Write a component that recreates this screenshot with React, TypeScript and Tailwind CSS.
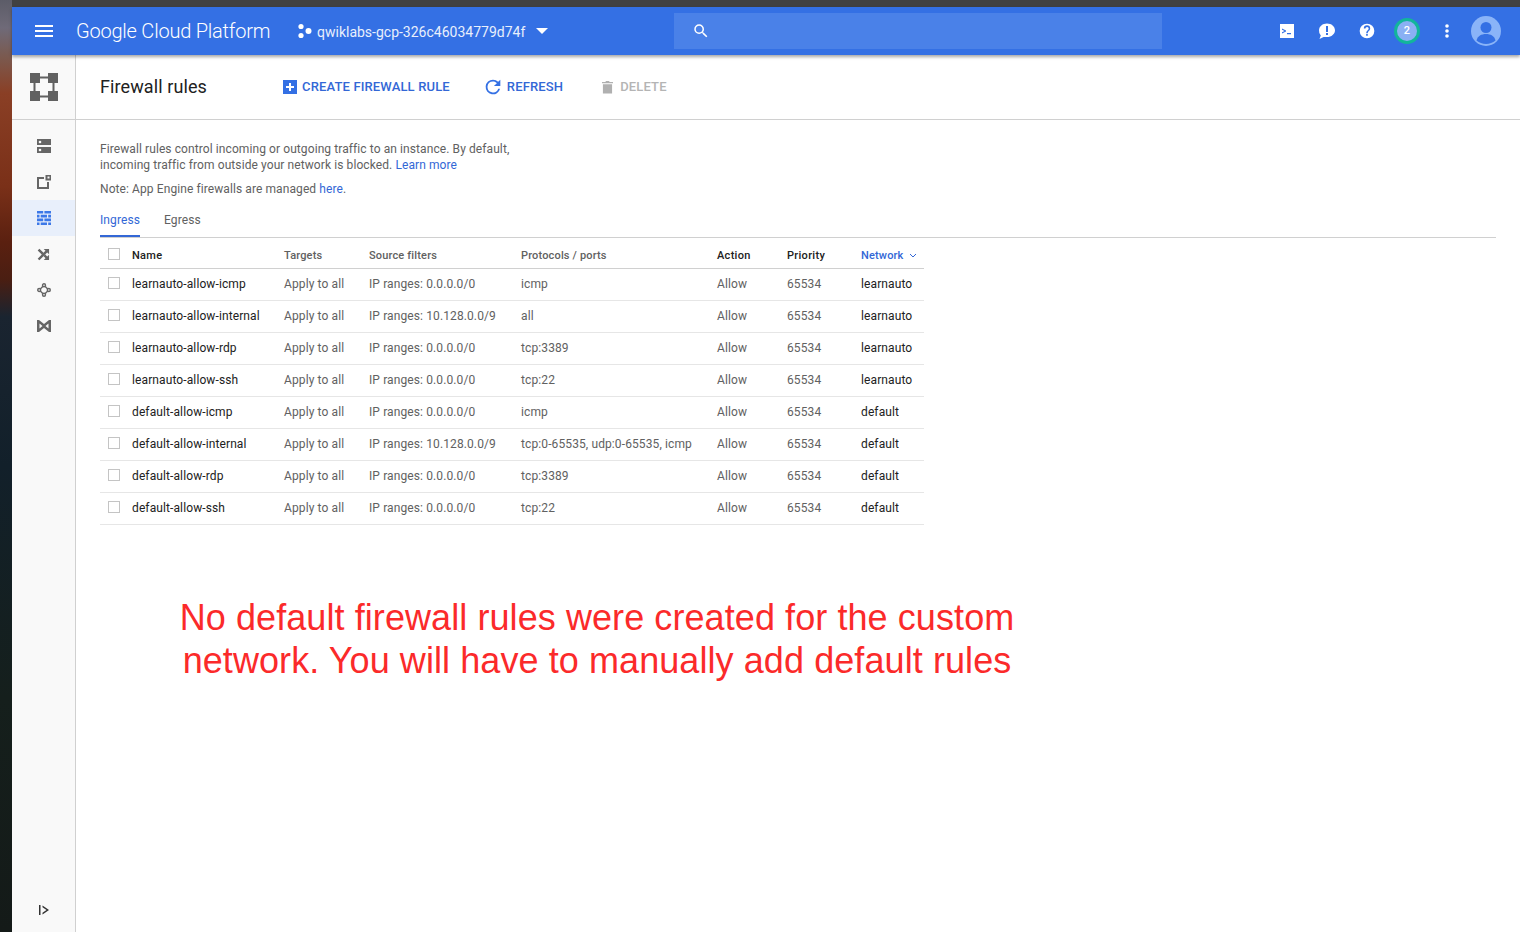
import React from 'react';

const ROWS = [
  ['learnauto-allow-icmp', 'IP ranges: 0.0.0.0/0', 'icmp', 'learnauto'],
  ['learnauto-allow-internal', 'IP ranges: 10.128.0.0/9', 'all', 'learnauto'],
  ['learnauto-allow-rdp', 'IP ranges: 0.0.0.0/0', 'tcp:3389', 'learnauto'],
  ['learnauto-allow-ssh', 'IP ranges: 0.0.0.0/0', 'tcp:22', 'learnauto'],
  ['default-allow-icmp', 'IP ranges: 0.0.0.0/0', 'icmp', 'default'],
  ['default-allow-internal', 'IP ranges: 10.128.0.0/9', 'tcp:0-65535, udp:0-65535, icmp', 'default'],
  ['default-allow-rdp', 'IP ranges: 0.0.0.0/0', 'tcp:3389', 'default'],
  ['default-allow-ssh', 'IP ranges: 0.0.0.0/0', 'tcp:22', 'default'],
];

const GRID = 'grid grid-cols-[32px_152px_85px_152px_196px_70px_74px_63px] items-center';

function Checkbox({ className }: { className: string }) {
  return <span className={`ml-2 block h-3 w-3 border border-[#c4c4c4] bg-white ${className}`} />;
}

function TopBar() {
  return (
    <header className="relative z-10 flex h-12 shrink-0 items-center bg-[#3470e4] text-white shadow-[0_2px_3px_rgba(0,0,0,0.35)]">
      <svg className="ml-[20px] h-6 w-6" viewBox="0 0 24 24" fill="currentColor">
        <path d="M3 18h18v-2H3v2zm0-5h18v-2H3v2zm0-7v2h18V6H3z" />
      </svg>
      <span className="ml-[20px] w-[221px] text-[20px] font-light tracking-[-0.22px]">Google Cloud Platform</span>
      <svg className="h-4 w-4" viewBox="0 0 16 16" fill="currentColor">
        <circle cx="4" cy="3.500" r="2.600" />
        <circle cx="11.500" cy="8" r="3" />
        <circle cx="4" cy="12.500" r="2.600" />
      </svg>
      <span className="ml-[4px] w-[219px] pt-[2px] text-sm text-[#e8effc]">qwiklabs-gcp-326c46034779d74f</span>
      <svg className="h-3 w-3" viewBox="0 0 12 12" fill="currentColor">
        <path d="M0 3h12L6 9z" />
      </svg>
      <div className="ml-[126px] flex h-9 w-[488px] items-center bg-[#4a81e8] pl-[18px]">
        <svg className="h-[18px] w-[18px]" viewBox="0 0 24 24" fill="currentColor">
          <path d="M15.500 14h-.79l-.28-.27A6.470 6.470 0 0 0 16 9.500 6.500 6.500 0 1 0 9.500 16c1.610 0 3.090-.59 4.230-1.570l.27.28v.79l5 4.990L20.490 19l-4.990-5zm-6 0C7.010 14 5 11.990 5 9.500S7.010 5 9.500 5 14 7.010 14 9.500 11.990 14 9.500 14z" />
        </svg>
      </div>
      <div className="ml-[117px] flex items-center">
        <svg className="h-4 w-4" viewBox="0 0 16 16">
          <path fill="#fff" fillRule="evenodd" d="M1 1h14v14H1zM3 5.500v1.300L5.600 8 3 9.200v1.300L7 8.600V7.400zM8 10v1.200h4V10z" />
        </svg>
        <svg className="ml-[23px] h-[18px] w-[18px]" viewBox="0 0 18 18">
          <path fill="#fff" fillRule="evenodd" d="M9 1.500c4.400 0 8 2.900 8 6.800s-3.600 6.800-8 6.800H5.600L1.500 17l1.300-3.600A6.600 6.600 0 0 1 1 8.300c0-3.900 3.600-6.800 8-6.800zM8 4v6h2V4zm0 7v2h2v-2z" />
        </svg>
        <svg className="ml-[23px] h-[16px] w-[16px]" viewBox="0 0 24 24" fill="#fff">
          <path d="M12 1a11 11 0 1 0 0 22 11 11 0 0 0 0-22zm1.200 18h-2.500v-2.500h2.500V19zm2.600-8.200-1.100 1.100c-.9.900-1.500 1.600-1.500 3.600h-2.400v-.6c0-1.300.6-2.500 1.500-3.400l1.500-1.500c.4-.5.7-1 .7-1.700a2.400 2.400 0 0 0-4.800 0H7.200a4.800 4.800 0 0 1 9.600 0c0 1-.4 1.900-1 2.500z" />
        </svg>
        <span className="ml-[19px] flex h-[26px] w-[26px] items-center justify-center rounded-full border-[3px] border-[#12b59b] bg-[#8ab0f4] text-[11px] font-medium text-white">
          2
        </span>
        <svg className="ml-[24px] h-4 w-1.5" viewBox="0 0 6 16" fill="#fff">
          <circle cx="3" cy="3" r="1.800" />
          <circle cx="3" cy="8" r="1.800" />
          <circle cx="3" cy="13" r="1.800" />
        </svg>
        <svg className="ml-[21px] h-[30px] w-[30px]" viewBox="0 0 30 30">
          <circle cx="15" cy="15" r="15" fill="#8ab4f8" />
          <circle cx="15" cy="11.500" r="5.500" fill="#3470e4" />
          <path d="M5.500 24.500c1-4.500 5-6.500 9.500-6.500s8.500 2 9.500 6.500a15 15 0 0 1-19 0z" fill="#3470e4" />
        </svg>
      </div>
    </header>
  );
}

function SideIcon({ active, children }: { active?: boolean; children: React.ReactNode }) {
  return (
    <div className={`flex h-9 items-center justify-center ${active ? 'bg-[#e8effb] text-[#3c78e8]' : 'text-[#666]'}`}>
      {children}
    </div>
  );
}

function Sidebar() {
  return (
    <aside className="flex w-[64px] shrink-0 flex-col border-r border-[#d0d0d0] bg-[#f9f9f9]">
      <div className="flex h-[65px] shrink-0 items-center justify-center border-b border-[#d0d0d0]">
        <svg className="h-7 w-7 text-[#616161]" viewBox="0 0 28 28" fill="currentColor">
          <path d="M0 0h10v10H0zM18 0h10v10H18zM0 18h10v10H0zM18 18h10v10H18z" />
          <path d="M10 3.500h8v2h-8zM10 22.500h8v2h-8zM3.500 10h2v8h-2zM22.500 10h2v8h-2z" />
        </svg>
      </div>
      <nav className="flex flex-col pt-[8px]">
        <SideIcon>
          <svg className="h-[14px] w-[14px]" viewBox="0 0 14 14" fill="currentColor">
            <path d="M0 0h14v6H0zM0 8h14v6H0z" />
            <circle cx="3" cy="3" r="1.300" fill="#f9f9f9" />
            <circle cx="3" cy="11" r="1.300" fill="#f9f9f9" />
          </svg>
        </SideIcon>
        <SideIcon>
          <svg className="h-[14px] w-[14px]" viewBox="0 0 14 14" fill="currentColor">
            <path fillRule="evenodd" d="M0 2h7v2H2v8h8V7h2v7H0zM8.500 0H14v5.500H8.500zM10.500 1.500v2h2v-2z" />
          </svg>
        </SideIcon>
        <SideIcon active>
          <svg className="h-[14px] w-[14px]" viewBox="0 0 14 14" fill="currentColor">
            <path d="M0 0h6.200v2.600H0zM7.400 0H14v2.600H7.400zM0 3.800h2.500v2.600H0zM3.700 3.800H10v2.600H3.700zM11.200 3.800H14v2.600h-2.800zM0 7.600h6.200v2.600H0zM7.400 7.600H14v2.600H7.400zM0 11.400h2.500V14H0zM3.700 11.400H10V14H3.700zM11.200 11.400H14V14h-2.800z" />
          </svg>
        </SideIcon>
        <SideIcon>
          <svg className="h-[15px] w-[15px]" viewBox="0 0 24 24" fill="currentColor">
            <path d="M10.600 9.200 5.400 4 4 5.400l5.200 5.200zM14.500 4l2 2L4 18.600 5.400 20 18 7.500l2 2V4zM14.800 13.400l-1.400 1.400 3.100 3.100-2 2.100H20v-5.500l-2 2z" stroke="currentColor" strokeWidth="1.800" />
          </svg>
        </SideIcon>
        <SideIcon>
          <svg className="h-[14px] w-[14px]" viewBox="0 0 14 14" fill="none" stroke="currentColor" strokeWidth="1.400">
            <circle cx="7" cy="2.200" r="1.500" />
            <circle cx="2.200" cy="7" r="1.500" />
            <circle cx="11.800" cy="7" r="1.500" />
            <circle cx="7" cy="11.800" r="1.500" />
            <path d="M6 3.300 3.300 6M8 3.300 10.700 6M3.300 8 6 10.700M10.700 8 8 10.700" />
          </svg>
        </SideIcon>
        <SideIcon>
          <svg className="h-[14px] w-[14px]" viewBox="0 0 14 14" fill="currentColor">
            <path fillRule="evenodd" d="M0 1h2l5 4 5-4h2v12h-2L7 9l-5 4H0zM2.500 4.500v5L5.500 7zM11.500 4.500 8.500 7l3 2.500z" />
          </svg>
        </SideIcon>
      </nav>
      <div className="mt-auto flex h-[44px] items-center justify-center text-[#333]">
        <svg className="h-[12px] w-[12px]" viewBox="0 0 12 12" fill="currentColor">
          <path d="M1 1h1.500v10H1zM4.500 1.500 11 6l-6.500 4.500V8.800L8.500 6 4.500 3.200z" />
        </svg>
      </div>
    </aside>
  );
}

function FirewallTable() {
  return (
    <div className="w-[824px] text-xs tracking-[0.11px]">
      <div className={`${GRID} h-[31px] border-b border-[#d0d0d0] pt-[7px] text-[11px] font-medium tracking-[0.16px] text-[#616161]`}>
        <Checkbox className="mb-[6px]" />
        <span className="tracking-[0.3px] text-[#212121]">Name</span>
        <span>Targets</span>
        <span>Source filters</span>
        <span>Protocols / ports</span>
        <span className="tracking-[0.3px] text-[#212121]">Action</span>
        <span className="tracking-[0.3px] text-[#212121]">Priority</span>
        <span className="flex items-center text-[#3367d6]">
          Network
          <svg className="ml-[5px] mb-[2px] h-2 w-2" viewBox="0 0 8 8" fill="none" stroke="currentColor" strokeWidth="1">
            <path d="M1 2 4 5 7 2" />
          </svg>
        </span>
      </div>
      {ROWS.map(([name, source, ports, network]) => (
        <div key={name} className={`${GRID} h-[32px] border-b border-[#e6e6e6] pb-[2px] text-[#616161]`}>
          <Checkbox className="mb-[1px]" />
          <span className="text-[#212121]">{name}</span>
          <span>Apply to all</span>
          <span>{source}</span>
          <span>{ports}</span>
          <span>Allow</span>
          <span>65534</span>
          <span className="text-[#212121]">{network}</span>
        </div>
      ))}
    </div>
  );
}

export default function App() {
  return (
    <div className="flex h-[932px] w-[1520px] overflow-hidden bg-white font-['Roboto',sans-serif]">
      <div className="w-3 shrink-0 bg-[linear-gradient(180deg,#5c5c68_0%,#6f6a78_3%,#7a5a50_6%,#8a3f25_10%,#7a3018_20%,#5a2010_26%,#4a1e12_30%,#1a2430_34%,#12202a_50%,#151f1c_75%,#141a18_100%)]" />
      <div className="flex min-w-0 flex-1 flex-col">
        <div className="h-[7px] shrink-0 bg-[#414141]" />
        <TopBar />
        <div className="flex min-h-0 flex-1">
          <Sidebar />
          <main className="min-w-0 flex-1">
            <div className="flex h-[65px] items-center border-b border-[#d0d0d0] pl-6">
              <h1 className="w-[183px] text-lg font-normal tracking-[0.1px] text-[#212121]">Firewall rules</h1>
              <button className="flex items-center text-[13px] font-medium tracking-[0.15px] text-[#3367d6]">
                <svg className="mr-[5px] h-[14px] w-[14px]" viewBox="0 0 14 14">
                  <path fill="#3470e4" fillRule="evenodd" d="M0 0h14v14H0zM6 3v3H3v2h3v3h2V8h3V6H8V3z" />
                </svg>
                CREATE FIREWALL RULE
              </button>
              <button className="ml-[32px] flex items-center text-[13px] font-medium tracking-[0.15px] text-[#3367d6]">
                <svg className="mr-[3px] h-[22px] w-[22px]" viewBox="0 0 24 24" fill="#3470e4">
                  <path d="M17.650 6.350A7.960 7.960 0 0 0 12 4a8 8 0 1 0 7.730 10h-2.080A6 6 0 1 1 12 6c1.660 0 3.140.69 4.220 1.780L13 11h7V4l-2.350 2.350z" />
                </svg>
                REFRESH
              </button>
              <button className="ml-[39px] flex items-center text-[13px] font-medium tracking-[0.15px] text-[#b4b4b4]">
                <svg className="mr-[7px] h-[14px] w-[11px]" viewBox="0 0 12 14" fill="#b0b0b0">
                  <path d="M0 1.500h3.500L4.500.5h3l1 1H12V3H0zM1 4h10v10H1z" />
                </svg>
                DELETE
              </button>
            </div>
            <div className="px-6 pt-[21px] text-xs leading-4 tracking-[0.09px] text-[#616161]">
              <p>
                Firewall rules control incoming or outgoing traffic to an instance. By default,
                <br />
                incoming traffic from outside your network is blocked. <a className="text-[#3367d6]">Learn more</a>
              </p>
              <p className="mt-2">
                Note: App Engine firewalls are managed <a className="text-[#3367d6]">here</a>.
              </p>
              <div className="mt-[15px] flex border-b border-[#d0d0d0]">
                <span className="h-[25px] w-[40px] border-b-2 border-[#3367d6] text-[#3367d6]">Ingress</span>
                <span className="ml-6">Egress</span>
              </div>
              <FirewallTable />
              <p className="mt-[71px] ml-[-3px] w-[1000px] text-center font-['Liberation_Sans',sans-serif] text-[36px] leading-[43px] tracking-[0.08px] text-[#fb2a2a]">
                No default firewall rules were created for the custom
                <br />
                network. You will have to manually add default rules
              </p>
            </div>
          </main>
        </div>
      </div>
    </div>
  );
}
